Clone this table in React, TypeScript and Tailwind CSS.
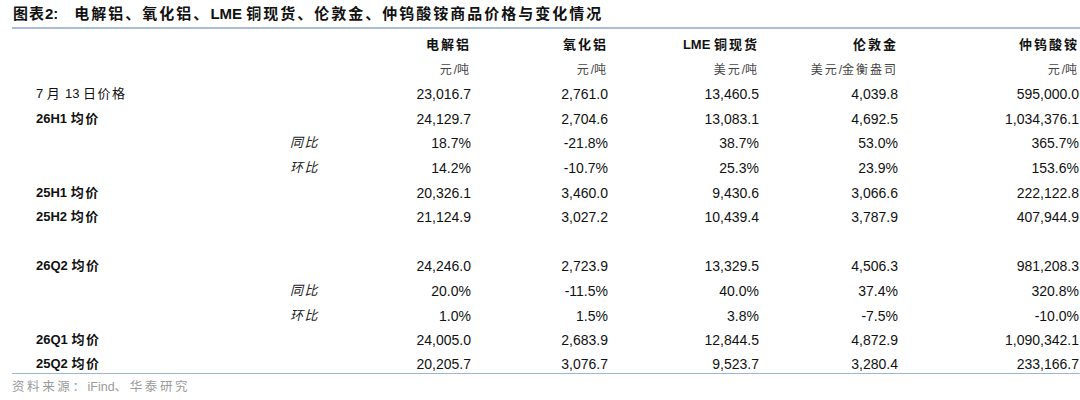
import React from 'react';

type Row = {
  label?: string;
  bold?: boolean;
  sub?: string;
  values?: string[];
};

const ROWS: Row[] = [
  { label: '7 月 13 日价格', values: ['23,016.7', '2,761.0', '13,460.5', '4,039.8', '595,000.0'] },
  { label: '26H1 均价', bold: true, values: ['24,129.7', '2,704.6', '13,083.1', '4,692.5', '1,034,376.1'] },
  { sub: '同比', values: ['18.7%', '-21.8%', '38.7%', '53.0%', '365.7%'] },
  { sub: '环比', values: ['14.2%', '-10.7%', '25.3%', '23.9%', '153.6%'] },
  { label: '25H1 均价', bold: true, values: ['20,326.1', '3,460.0', '9,430.6', '3,066.6', '222,122.8'] },
  { label: '25H2 均价', bold: true, values: ['21,124.9', '3,027.2', '10,439.4', '3,787.9', '407,944.9'] },
  {},
  { label: '26Q2 均价', bold: true, values: ['24,246.0', '2,723.9', '13,329.5', '4,506.3', '981,208.3'] },
  { sub: '同比', values: ['20.0%', '-11.5%', '40.0%', '37.4%', '320.8%'] },
  { sub: '环比', values: ['1.0%', '1.5%', '3.8%', '-7.5%', '-10.0%'] },
  { label: '26Q1 均价', bold: true, values: ['24,005.0', '2,683.9', '12,844.5', '4,872.9', '1,090,342.1'] },
  { label: '25Q2 均价', bold: true, values: ['20,205.7', '3,076.7', '9,523.7', '3,280.4', '233,166.7'] },
];

// column widths, right edges at 471 / 608 / 759 / 898 / 1079
const COLS = ['w-[101px]', 'w-[137px]', 'w-[151px]', 'w-[139px]', 'w-[181px]'];

const HEADERS = ['电解铝', '氧化铝', 'LME 铜现货', '伦敦金', '仲钨酸铵'];
const UNITS = ['元/吨', '元/吨', '美元/吨', '美元/金衡盎司', '元/吨'];

// 中文字符加字距，拉丁字符不加
function Sp({ text, track }: { text: string; track: string }) {
  const parts = text.split(/([\u3000-\u303f\u4e00-\u9fff\uff00-\uffef]+)/);
  return (
    <>
      {parts.map((p, i) =>
        /[\u3000-\u303f\u4e00-\u9fff\uff00-\uffef]/.test(p) ? (
          <span key={i} className={track}>
            {p}
          </span>
        ) : (
          <span key={i}>{p}</span>
        )
      )}
    </>
  );
}

function Cells({ items, track }: { items: string[]; track?: string }) {
  return (
    <>
      {items.map((v, i) => (
        <div key={i} className={`${COLS[i]} shrink-0 text-right`}>
          {track ? <Sp text={v} track={track} /> : v}
        </div>
      ))}
    </>
  );
}

export default function App() {
  return (
    <div className="w-[1080px] h-[400px] bg-white text-[#111] font-['Liberation_Sans','Noto_Sans_CJK_SC',sans-serif] overflow-hidden">
      {/* 标题 */}
      <div className="h-[27px] flex items-center pl-[13px] text-[15px] font-bold leading-none">
        <span>
          <Sp text="图表2:" track="tracking-[1px]" />
        </span>
        <span className="ml-[16px]">
          <Sp text="电解铝、氧化铝、LME 铜现货、伦敦金、仲钨酸铵商品价格与变化情况" track="tracking-[2px]" />
        </span>
      </div>
      <div className="ml-[12px] h-[2px] bg-[#a9bdd6]" />

      {/* 表格 */}
      <div className="ml-[12px] pt-[3.7px] border-b-[1.5px] border-[#9fb5d4]">
        <div className="flex items-center h-[24.6px] pl-[24px] text-[13px] font-bold leading-[16px]">
          <div className="w-[254px] shrink-0" />
          <div className="w-[80px] shrink-0" />
          <Cells items={HEADERS} track="tracking-[2px]" />
        </div>
        <div className="flex items-center h-[24.6px] pl-[24px] text-[12px] leading-[16px] text-[#444]">
          <div className="w-[254px] shrink-0" />
          <div className="w-[80px] shrink-0" />
          <Cells items={UNITS} track="tracking-[2px]" />
        </div>
        {ROWS.map((r, idx) => {
          const last = idx === ROWS.length - 1;
          return (
            <div
              key={idx}
              className={`flex pl-[24px] text-[14px] leading-[16px] ${
                last ? 'h-[20.5px] items-end pb-[1px]' : 'h-[24.6px] items-center'
              }`}
            >
              <div className={`w-[254px] shrink-0 text-[13px] ${r.bold ? 'font-bold' : ''}`}>
                {r.label && <Sp text={r.label} track="tracking-[1.5px]" />}
              </div>
              <div className="w-[80px] shrink-0 text-[13px] italic tracking-[1.5px] text-[#222]">{r.sub}</div>
              {r.values && <Cells items={r.values} />}
            </div>
          );
        })}
      </div>

      {/* 资料来源 */}
      <div className="h-[26px] flex items-center pl-[12px] text-[12.5px] text-[#9a9a9a]">
        <Sp text="资料来源：iFind、华泰研究" track="tracking-[2.6px]" />
      </div>
    </div>
  );
}
